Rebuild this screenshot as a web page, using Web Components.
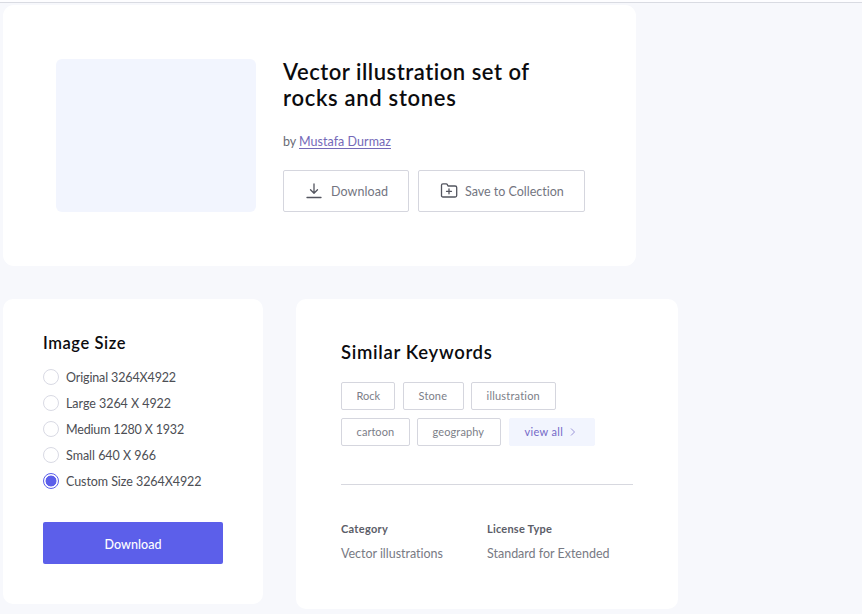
<!DOCTYPE html>
<html lang="en">
<head>
<meta charset="utf-8">
<title>Vector illustration set of rocks and stones</title>
<style>
html,body{margin:0;height:100%;overflow:hidden;background:#f7f8fc}
body{font-family:Lato,"Open Sans",sans-serif}
</style>
</head>
<body>
<asset-page></asset-page>
<script>
const define = (name, html, setup) => customElements.define(name, class extends HTMLElement {
  connectedCallback() {
    if (this.shadowRoot) return;
    const t = document.createElement('template');
    t.innerHTML = html;
    this.attachShadow({mode: 'open'}).append(t.content.cloneNode(true));
    if (setup) setup(this, this.shadowRoot);
  }
});

/* A single line of text, tracked to the width given in its "w" attribute. */
define('ui-text', `<style>
:host{display:block;white-space:nowrap;width:max-content}
span{display:inline-block}
:host([underline]) span{text-decoration:underline;text-underline-offset:1.5px;text-decoration-thickness:1px}
</style><span><slot></slot></span>`, (el, root) => {
  const span = root.querySelector('span');
  const target = parseFloat(el.getAttribute('w'));
  const n = el.textContent.length;
  const natural = span.getBoundingClientRect().width;
  if (target && n && natural) {
    span.style.letterSpacing = ((target - natural) / n).toFixed(3) + 'px';
    el.style.width = target + 'px';
  }
});

define('ui-card', `<style>
:host{display:block;box-sizing:border-box;background:#fff;border-radius:11px}
</style><slot></slot>`);

define('outline-button', `<style>
:host{display:flex;box-sizing:border-box;height:42px;align-items:center;border:1px solid #d5d6de;border-radius:2px;color:#73757f;font-size:12.5px;line-height:18px}
slot[name=icon]::slotted(svg){flex:none;display:block}
::slotted(ui-text){padding-top:2px}
</style><slot name="icon"></slot><slot></slot>`);

define('size-option', `<style>
:host{display:flex;align-items:center;gap:7px;height:26px;color:#4c4e54;font-size:12.5px;line-height:18px}
::slotted(ui-text){padding-top:2px}
i{box-sizing:border-box;width:16px;height:16px;border:1px solid #d9dae4;border-radius:50%;background:#fff;flex:none}
:host([checked]) i{border-color:#5c5fea;background:radial-gradient(circle,#5c5fea 5.1px,#fff 5.8px)}
</style><i></i><slot></slot>`);

define('keyword-chip', `<style>
:host{display:flex;box-sizing:border-box;height:28px;align-items:center;padding-left:14.6px;border:1px solid #d5d6de;border-radius:2px;color:#7c7e88;font-size:11px;line-height:16px}
:host([accent]){background:#f2f5fe;border-color:#f2f5fe;color:#7469c8;gap:7px}
</style><slot></slot>`);

define('asset-hero', `<style>
:host{display:block}
ui-card{width:633px;height:261px;padding:54px 0 0 53px;display:flex;gap:27px}
.thumb{width:200px;height:153px;border-radius:6px;background:#f2f5fe;flex:none}
.title{margin:0;font-size:22px;line-height:26px;font-weight:600;color:#0b0b0e}
.by{display:flex;gap:3px;margin-top:22px;font-size:12.5px;line-height:18px;color:#696b76}
a{color:#7469b8;text-decoration:none}
.actions{display:flex;gap:9px;margin-top:19px}
.dl{width:126px;padding-left:22px;gap:8px}
.save{width:167px;padding-left:21px;gap:7px}
</style>
<ui-card>
<div class="thumb"></div>
<div>
<h1 class="title"><ui-text w="247">Vector illustration set of</ui-text><ui-text w="173.5">rocks and stones</ui-text></h1>
<div class="by"><ui-text w="13">by</ui-text><a href="#"><ui-text underline w="92">Mustafa Durmaz</ui-text></a></div>
<div class="actions">
<outline-button class="dl"><svg slot="icon" width="17" height="18" viewBox="0 0 17 18" fill="none" stroke="#53555f" stroke-width="1.3" stroke-linecap="round" stroke-linejoin="round"><path d="M8 2v9M4.5 7.7L8 11.2l3.5-3.5M1 15.5h14"/></svg><ui-text w="57">Download</ui-text></outline-button>
<outline-button class="save"><svg slot="icon" width="18" height="18" viewBox="0 0 18 18" fill="none" stroke="#53555f" stroke-width="1.3" stroke-linecap="round" stroke-linejoin="round"><path d="M1.5 14V3.2q0-1.4 1.4-1.4h3.3q.7 0 1 .6l.8 1.6h7.1q1.6 0 1.6 1.6v7.9q0 1.5-1.5 1.5H3q-1.5 0-1.5-1.5zM9 6.8v5M6.5 9.3h5"/></svg><ui-text w="99">Save to Collection</ui-text></outline-button>
</div>
</div>
</ui-card>`);

define('image-size-panel', `<style>
:host{display:block}
ui-card{width:260px;height:305px;padding:33px 40px 0;border-radius:10px}
h2{margin:0 0 10px;font-size:16.5px;line-height:22px;font-weight:600;color:#0b0b0e}
button{box-sizing:border-box;display:flex;align-items:center;justify-content:center;width:180px;height:42px;margin:28px 0 0;padding:3px 0 0;border:0;border-radius:2px;background:#5c5fea;color:#fff;font:500 12.5px/18px Lato,sans-serif}
</style>
<ui-card>
<h2><ui-text w="83">Image Size</ui-text></h2>
<size-option><ui-text w="110">Original 3264X4922</ui-text></size-option>
<size-option><ui-text w="105">Large 3264 X 4922</ui-text></size-option>
<size-option><ui-text w="118">Medium 1280 X 1932</ui-text></size-option>
<size-option><ui-text w="90">Small 640 X 966</ui-text></size-option>
<size-option checked><ui-text w="135.5">Custom Size 3264X4922</ui-text></size-option>
<button><ui-text w="57">Download</ui-text></button>
</ui-card>`);

define('keywords-panel', `<style>
:host{display:block}
ui-card{width:382px;height:310px;padding:41px 45px 0;border-radius:10px}
h2{margin:0 0 18px;font-size:18.5px;line-height:24px;font-weight:600;color:#0b0b0e}
.row{display:flex;gap:8px}
.row+.row{margin-top:8px}
hr{margin:38px 0 36px;border:0;height:1px;background:#d7d8df}
.meta{display:grid;grid-template-columns:146px 146px}
dl{margin:0}
dt{font-size:11px;line-height:16px;font-weight:700;color:#5b5d68}
dd{margin:8px 0 0;font-size:12.5px;line-height:18px;color:#787a84}
</style>
<ui-card>
<h2><ui-text w="151.5">Similar Keywords</ui-text></h2>
<div class="row">
<keyword-chip style="width:54px"><ui-text w="23.5">Rock</ui-text></keyword-chip>
<keyword-chip style="width:61px"><ui-text w="28.5">Stone</ui-text></keyword-chip>
<keyword-chip style="width:85px;margin-left:-1px"><ui-text w="53.5">illustration</ui-text></keyword-chip>
</div>
<div class="row">
<keyword-chip style="width:69px"><ui-text w="37.5">cartoon</ui-text></keyword-chip>
<keyword-chip style="width:84px;margin-left:-1px"><ui-text w="51.5">geography</ui-text></keyword-chip>
<keyword-chip accent style="width:86px"><ui-text w="38.5">view all</ui-text><svg width="6" height="8" viewBox="0 0 6 8" fill="none" stroke="#9a94d8"><path d="M1 .5L4.5 4L1 7.5"/></svg></keyword-chip>
</div>
<hr>
<div class="meta">
<dl><dt><ui-text w="47">Category</ui-text></dt><dd><ui-text w="102">Vector illustrations</ui-text></dd></dl>
<dl><dt><ui-text w="65">License Type</ui-text></dt><dd><ui-text w="122.5">Standard for Extended</ui-text></dd></dl>
</div>
</ui-card>`);

define('asset-page', `<style>
:host{display:block}
header{height:2px;background:#fdfdff;border-bottom:1px solid #d9dbe2}
main{padding:2px 0 0 3px}
.panels{display:flex;align-items:flex-start;gap:33px;margin-top:33px}
</style>
<header></header>
<main><asset-hero></asset-hero>
<div class="panels"><image-size-panel></image-size-panel><keywords-panel></keywords-panel></div></main>`);
</script>
</body>
</html>
